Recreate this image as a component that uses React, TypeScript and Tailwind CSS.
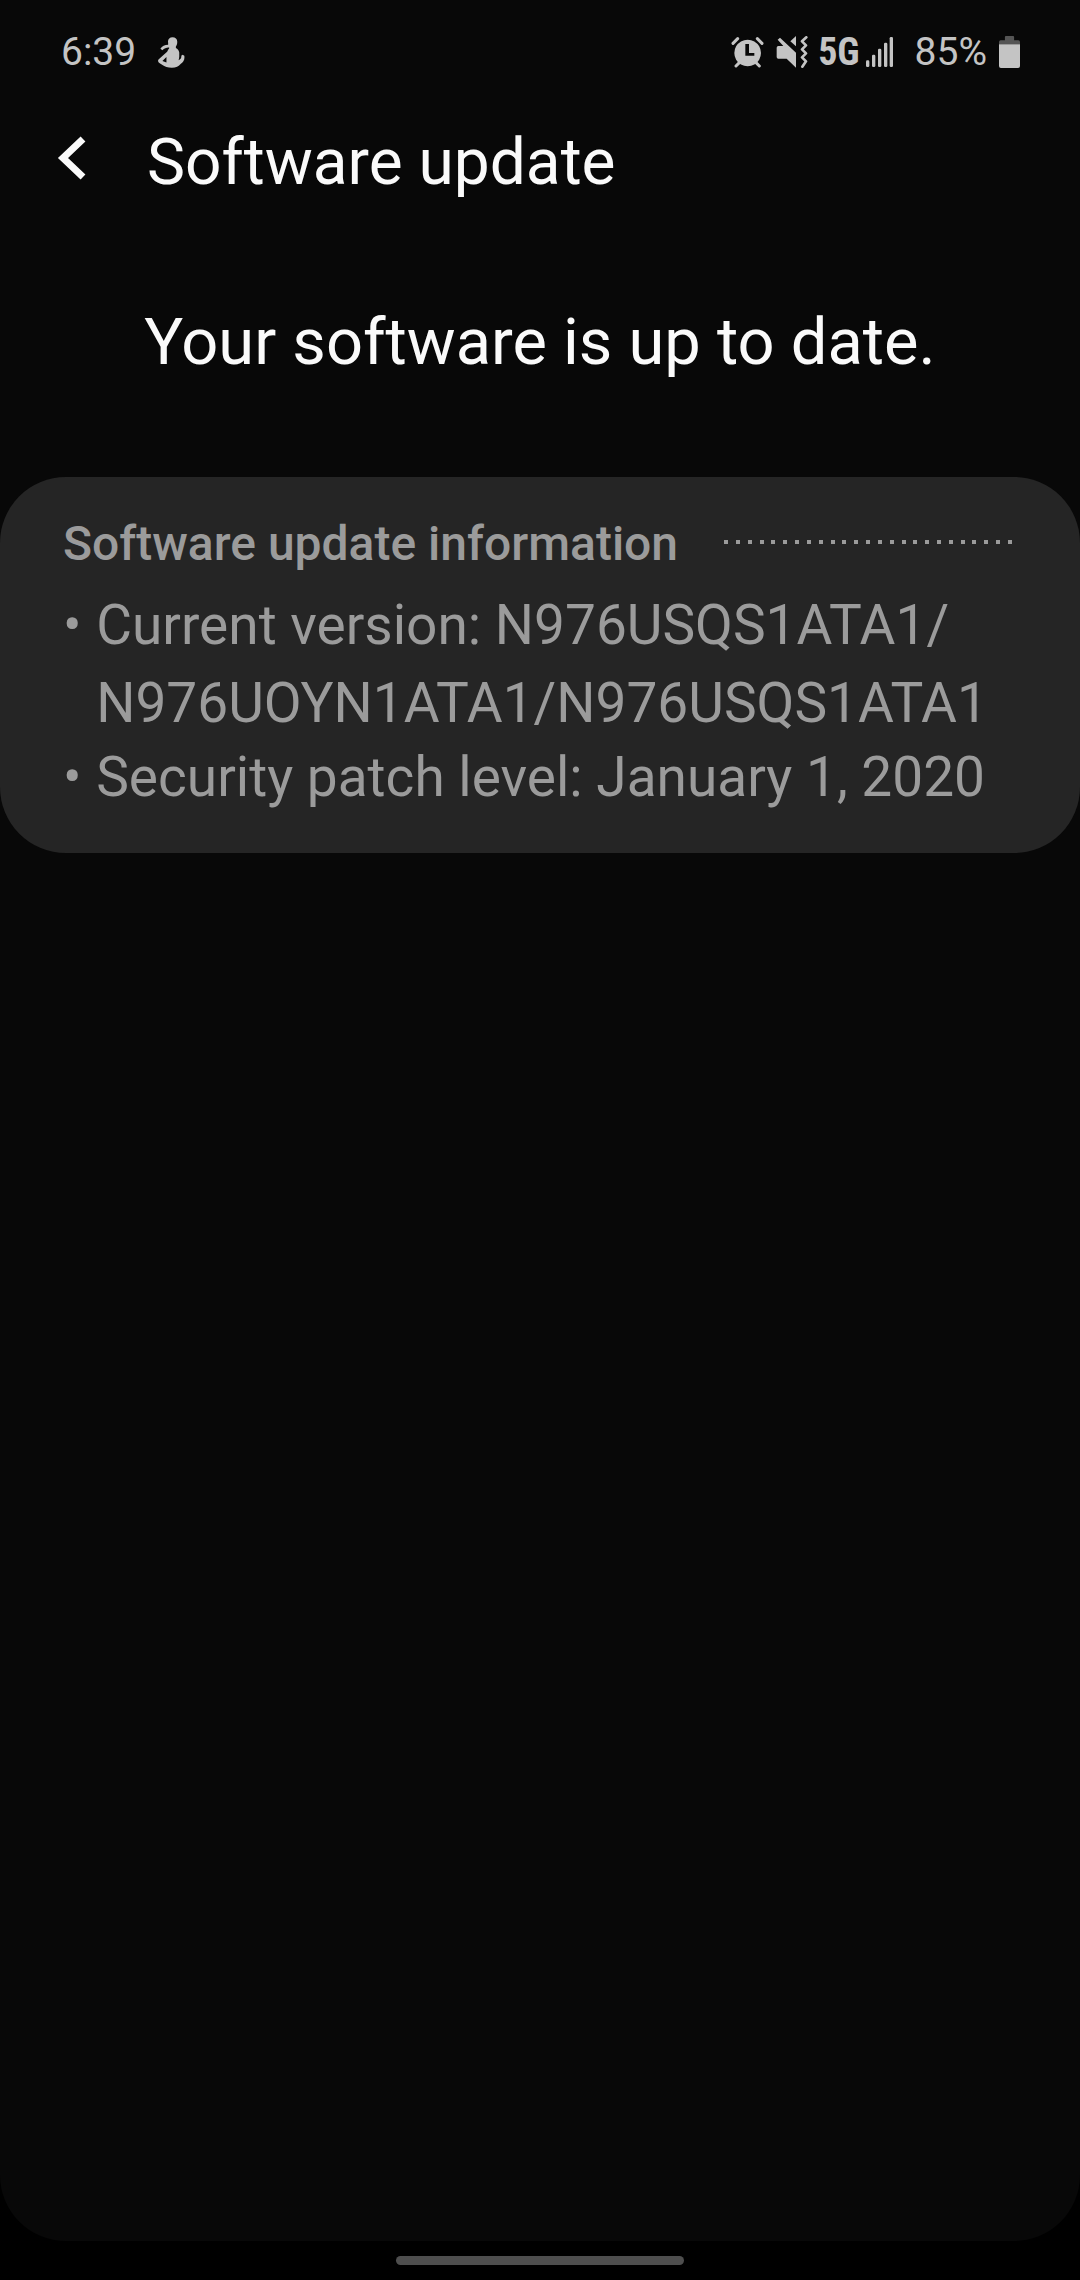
import type { ReactNode } from "react";

const SIGNAL_BARS = [
  { x: 0, top: 70 },
  { x: 18, top: 53 },
  { x: 36, top: 35 },
  { x: 54, top: 17 },
  { x: 71, top: 0 },
];

function ContactIcon() {
  return (
    <svg viewBox="354 46 80 92" className="h-[31px] w-[27px] fill-current" aria-hidden="true">
      <path d="M384 63 C382 54 388 47 397 47 C406 47 412 53 411 62 C411 67 409 71 407 74 L407 79 C412 82 416 86 417 92 L417 104 C417 108 416 112 415 115 C421 113 424 108 423 102 L427 99 L432 102 C434 113 429 121 421 126 C416 133 407 137 395 137 C383 137 374 134 366 128 L358 123 C353 120 353 114 357 111 L381 90 C383 86 384 83 387 80 L387 77 C381 76 373 79 367 85 L361 81 C366 73 374 69 384 69 Z M379 105 L367 117 L379 122 Z" fillRule="evenodd" />
    </svg>
  );
}

function AlarmIcon() {
  return (
    <svg viewBox="37 43 99 96" className="h-8 w-[33px] fill-current" aria-hidden="true">
      <path d="M87 54 A40 40 0 1 1 86.900 54 Z M80 67 L80 102 L107 102 L107 94 L91 94 L91 67 Z" fillRule="evenodd" />
      <path d="M43 65 L57 51 M130 65 L116 51" stroke="currentColor" strokeWidth="9" strokeLinecap="round" />
      <path d="M52 133 L62 123 M122 133 L112 123" stroke="currentColor" strokeWidth="9" strokeLinecap="round" />
    </svg>
  );
}

function VibrateIcon() {
  return (
    <svg viewBox="174 43 96 96" className="h-8 w-8 fill-current" aria-hidden="true">
      <path d="M179 54 L186 48 L234 93 L234 138 L206 111 L181 111 Q176 111 176 106 L176 78 Q176 73 181 73 L196 73 Z" />
      <path d="M217 59 L234 43 L234 74 Z" />
      <path d="M265 47 L252 59 L264 71 L252 83 L264 95 L252 107 L264 119 L253 135" fill="none" stroke="currentColor" strokeWidth="8" strokeLinejoin="round" strokeLinecap="round" />
    </svg>
  );
}

function SignalIcon() {
  return (
    <svg viewBox="0 0 81 90" className="h-[30px] w-[27px] fill-current" aria-hidden="true">
      {SIGNAL_BARS.map((bar) => (
        <rect key={bar.x} x={bar.x} y={bar.top} width="10" height={90 - bar.top} rx="4" />
      ))}
    </svg>
  );
}

function BatteryIcon() {
  return (
    <svg viewBox="0 0 64 97" className="h-8 w-[21px]" aria-hidden="true">
      <path d="M18 13 V3 Q18 0 21 0 H43 Q46 0 46 3 V13 H59 Q64 13 64 18 V25 H0 V18 Q0 13 5 13 Z" fill="#555555" />
      <path d="M0 25 H64 V91 Q64 97 58 97 H6 Q0 97 0 91 Z" fill="currentColor" />
    </svg>
  );
}

function StatusBar() {
  return (
    <div className="flex h-[104px] items-center justify-between pr-[60px] pl-[61px] text-[39px] leading-[48px] text-[#c4c4c4]">
      <div className="flex items-center gap-[22px]">
        <span>6:39</span>
        <ContactIcon />
      </div>
      <div className="flex items-center">
        <AlarmIcon />
        <span className="ml-3">
          <VibrateIcon />
        </span>
        <span className="ml-2.5 font-['Roboto_Condensed','Liberation_Sans_Narrow',Roboto,sans-serif] text-[38px] font-bold">5G</span>
        <span className="ml-1.5">
          <SignalIcon />
        </span>
        <span className="ml-[22px]">85%</span>
        <span className="ml-3">
          <BatteryIcon />
        </span>
      </div>
    </div>
  );
}

function DottedLine() {
  return (
    <div className="mr-1 mb-1 flex flex-1 justify-between" aria-hidden="true">
      {Array.from({ length: 25 }, (_, i) => (
        <span key={i} className="size-1 bg-[#9b9b9b]" />
      ))}
    </div>
  );
}

function InfoItem({ children, className }: { children: ReactNode; className: string }) {
  return (
    <li className={`flex gap-px ${className}`}>
      <span className="whitespace-pre">{"• "}</span>
      <span>{children}</span>
    </li>
  );
}

export default function App() {
  return (
    <div className="flex min-h-screen flex-col bg-black font-[Roboto,sans-serif]">
      <main className="flex-1 rounded-b-[66px] bg-[#080808] text-[#fafafa]">
        <StatusBar />
        <header className="flex h-[118px] items-center pl-[54px]">
          <button type="button" aria-label="Back" className="mb-2.5">
            <svg viewBox="0 0 36 48" className="h-12 w-9" fill="none" aria-hidden="true">
              <path d="M29 5 L9 24 L29 43" stroke="currentColor" strokeWidth="7" strokeLinejoin="miter" />
            </svg>
          </button>
          <h1 className="ml-[57px] text-[64px] leading-[72px]">Software update</h1>
        </header>

        <p className="mt-[84px] mb-[99px] text-center text-[65px] leading-[72px]">Your software is up to date.</p>

        <section className="rounded-[66px] bg-[#252525] pt-[39px] pr-16 pb-[41px] pl-[63px] text-[#9b9b9b]">
          <div className="flex items-center gap-[46px]">
            <h2 className="text-[48px] leading-[56px] font-medium">Software update information</h2>
            <DottedLine />
          </div>
          <ul className="mt-3.5 text-[55px]">
            <InfoItem className="leading-[78px]">
              Current version: N976USQS1ATA1/
              <wbr />
              N976UOYN1ATA1/N976USQS1ATA1
            </InfoItem>
            <InfoItem className="leading-[70px]">Security patch level: January 1, 2020</InfoItem>
          </ul>
        </section>
      </main>

      <nav className="flex h-[39px] items-center justify-center">
        <button type="button" aria-label="Home" className="h-[9px] w-[288px] rounded-full bg-[#4e4e4e]" />
      </nav>
    </div>
  );
}
